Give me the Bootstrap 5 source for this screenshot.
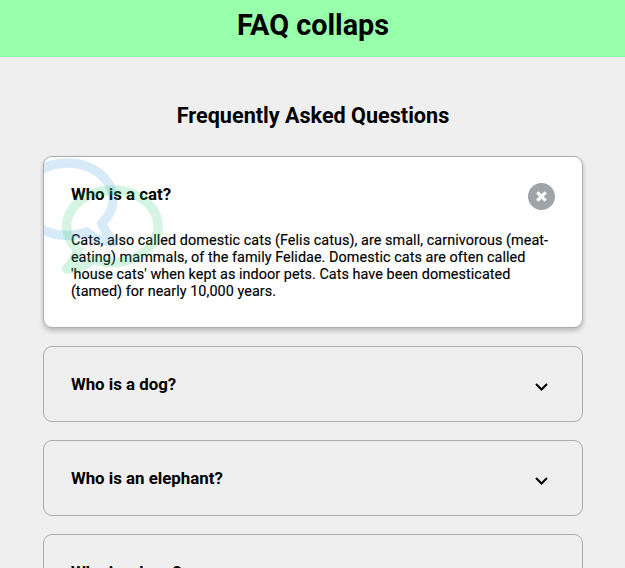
<!DOCTYPE html>
<html lang="en">
<head>
<meta charset="utf-8">
<meta name="viewport" content="width=device-width, initial-scale=1">
<title>FAQ collaps</title>
<link href="https://cdn.jsdelivr.net/npm/bootstrap@5.3.0/dist/css/bootstrap.min.css" rel="stylesheet">
<style>
body{font-family:Roboto,sans-serif;font-weight:400;background:#efefef;color:#000;height:568px;overflow:hidden}
.top-bar{background:#98ffab;height:57.4px;padding:8px 0 0 1px}
.top-bar h1{font-size:28.8px;font-weight:700;line-height:34px}
.page-title{font-size:21.6px;font-weight:700;line-height:25px;margin:45.6px 0 27.6px;padding-left:1px}
.faq-list{width:540px;gap:18px}
.faq-item{border:1px solid #a9adaf;border-radius:9px;padding:27px 27px;height:76.4px;flex:none}
.faq-item h3{font-size:16.85px;font-weight:700;line-height:20px;margin:0;padding-left:.4px}
.faq-item.open{background:#fff;height:172px;box-shadow:0 3px 5px rgba(0,0,0,.12),0 3px 5px rgba(0,0,0,.1)}
.faq-head{height:20px}
.faq-text{font-size:14.4px;line-height:17px;letter-spacing:.057px;-webkit-text-stroke:.15px #000;margin:28px 0 0;padding-left:.4px;width:486px}
.bubble{width:100.8px;height:100.8px;opacity:.2;pointer-events:none}
.bubble-blue{left:-26.500px;top:-4.600px;transform:scaleX(-1);fill:#3498db}
.bubble-green{left:18.500px;top:22px;fill:#2ecc71}
.toggle{width:27px;height:27px;border:0;padding:0;background:transparent;margin-top:-1px}
.open .toggle{background:#9fa4a8;margin-top:-.6px}
</style>
</head>
<body>
<header class="top-bar text-center"><h1 class="m-0">FAQ collaps</h1></header>
<main>
<h2 class="page-title text-center">Frequently Asked Questions</h2>
<div class="faq-list d-flex flex-column mx-auto">
<section class="faq-item open position-relative overflow-hidden">
<div class="faq-head d-flex justify-content-between align-items-start"><h3>Who is a cat?</h3>
<button class="toggle rounded-circle d-flex align-items-center justify-content-center" aria-label="Close"><svg width="27" height="27" viewBox="0 0 27 27"><path d="M9.300 9.300l8.400 8.400m0-8.400l-8.400 8.400" stroke="#fff" stroke-width="3.200" fill="none"/></svg></button></div>
<p class="faq-text">Cats, also called domestic cats (Felis catus), are small, carnivorous (meat-eating) mammals, of the family Felidae. Domestic cats are often called 'house cats' when kept as indoor pets. Cats have been domesticated (tamed) for nearly 10,000 years.</p>
<svg class="bubble bubble-blue position-absolute" viewBox="0 0 512 512"><path d="M256 32C114.600 32 0 125.100 0 240c0 47.600 19.900 91.200 52.900 126.300C38 405.700 7 439.100 6.500 439.500c-6.600 7-8.400 17.200-4.600 26S14.400 480 24 480c61.500 0 110-25.700 139.100-46.300C192 442.800 223.200 448 256 448c141.400 0 256-93.100 256-208S397.400 32 256 32zm0 368c-26.700 0-53.100-4.100-78.400-12.100l-22.700-7.200-19.500 13.800c-14.300 10.100-33.900 21.400-57.500 29 7.300-12.100 14.400-25.700 19.900-40.200l10.600-28.100-20.600-21.800C69.700 314.100 48 282.200 48 240c0-88.200 93.300-160 208-160s208 71.800 208 160-93.300 160-208 160z"/></svg>
<svg class="bubble bubble-green position-absolute" viewBox="0 0 512 512"><path d="M256 32C114.600 32 0 125.100 0 240c0 47.600 19.900 91.200 52.900 126.300C38 405.700 7 439.100 6.500 439.500c-6.600 7-8.400 17.200-4.600 26S14.400 480 24 480c61.500 0 110-25.700 139.100-46.300C192 442.800 223.200 448 256 448c141.400 0 256-93.100 256-208S397.400 32 256 32zm0 368c-26.700 0-53.100-4.100-78.400-12.100l-22.700-7.200-19.500 13.800c-14.300 10.100-33.900 21.400-57.500 29 7.300-12.100 14.400-25.700 19.900-40.200l10.600-28.100-20.600-21.800C69.700 314.100 48 282.200 48 240c0-88.200 93.300-160 208-160s208 71.800 208 160-93.300 160-208 160z"/></svg>
</section>
<section class="faq-item d-flex justify-content-between"><h3>Who is a dog?</h3><button class="toggle" aria-label="Open"><svg class="d-block" width="27" height="27" viewBox="0 0 27 27"><path d="M8 11l5.500 5.500L19 11" stroke="#000" stroke-width="2" fill="none"/></svg></button></section>
<section class="faq-item d-flex justify-content-between"><h3>Who is an elephant?</h3><button class="toggle" aria-label="Open"><svg class="d-block" width="27" height="27" viewBox="0 0 27 27"><path d="M8 11l5.500 5.500L19 11" stroke="#000" stroke-width="2" fill="none"/></svg></button></section>
<section class="faq-item d-flex justify-content-between"><h3>Who is a bear?</h3><button class="toggle" aria-label="Open"><svg class="d-block" width="27" height="27" viewBox="0 0 27 27"><path d="M8 11l5.500 5.500L19 11" stroke="#000" stroke-width="2" fill="none"/></svg></button></section>
</div>
</main>
<script src="https://cdn.jsdelivr.net/npm/bootstrap@5.3.0/dist/js/bootstrap.bundle.min.js"></script>
</body>
</html>
